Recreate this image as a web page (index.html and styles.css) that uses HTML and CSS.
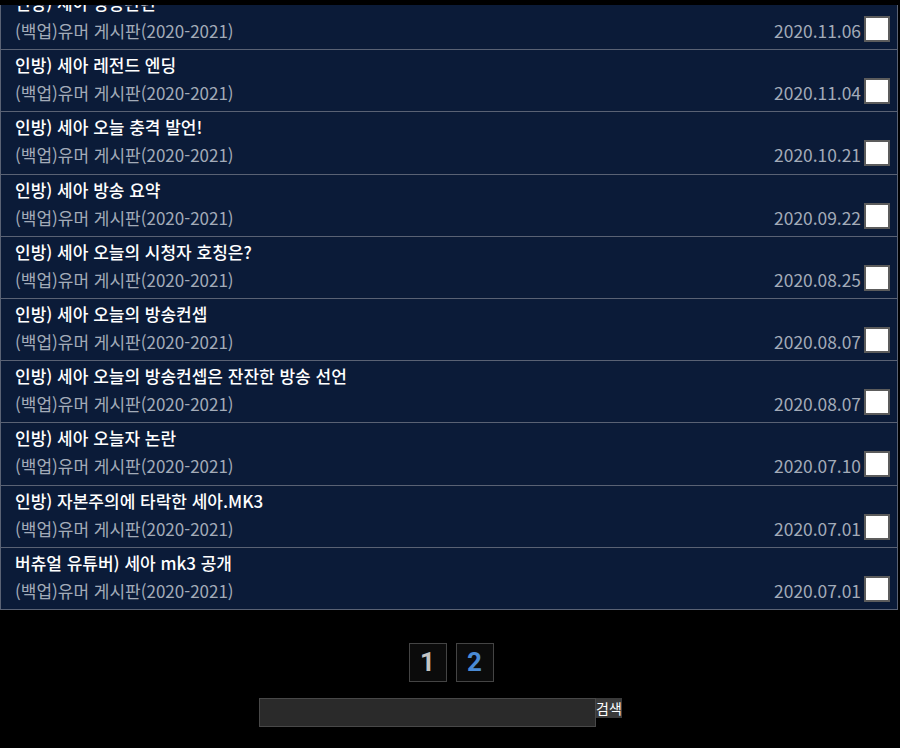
FILE: index.html
```html
<!DOCTYPE html>
<html lang="ko">
<head>
    <meta charset="UTF-8">
    <meta name="viewport" content="width=device-width, initial-scale=1.0">
    <title>(백업)유머 게시판</title>
    <link rel="stylesheet" href="styles.css">
</head>
<body>
    <div class="topbar"></div>
    <div class="board">
        <ul class="post-list">
            <li class="post">
                <div class="post-title">인방) 세아 방송관련</div>
                <div class="post-meta">
                    <span class="post-board">(백업)유머 게시판(2020-2021)</span>
                    <span class="post-side"><span class="post-date">2020.11.06</span><input type="checkbox" class="post-check"></span>
                </div>
            </li>
            <li class="post">
                <div class="post-title">인방) 세아 레전드 엔딩</div>
                <div class="post-meta">
                    <span class="post-board">(백업)유머 게시판(2020-2021)</span>
                    <span class="post-side"><span class="post-date">2020.11.04</span><input type="checkbox" class="post-check"></span>
                </div>
            </li>
            <li class="post">
                <div class="post-title">인방) 세아 오늘 충격 발언!</div>
                <div class="post-meta">
                    <span class="post-board">(백업)유머 게시판(2020-2021)</span>
                    <span class="post-side"><span class="post-date">2020.10.21</span><input type="checkbox" class="post-check"></span>
                </div>
            </li>
            <li class="post">
                <div class="post-title">인방) 세아 방송 요약</div>
                <div class="post-meta">
                    <span class="post-board">(백업)유머 게시판(2020-2021)</span>
                    <span class="post-side"><span class="post-date">2020.09.22</span><input type="checkbox" class="post-check"></span>
                </div>
            </li>
            <li class="post">
                <div class="post-title">인방) 세아 오늘의 시청자 호칭은?</div>
                <div class="post-meta">
                    <span class="post-board">(백업)유머 게시판(2020-2021)</span>
                    <span class="post-side"><span class="post-date">2020.08.25</span><input type="checkbox" class="post-check"></span>
                </div>
            </li>
            <li class="post">
                <div class="post-title">인방) 세아 오늘의 방송컨셉</div>
                <div class="post-meta">
                    <span class="post-board">(백업)유머 게시판(2020-2021)</span>
                    <span class="post-side"><span class="post-date">2020.08.07</span><input type="checkbox" class="post-check"></span>
                </div>
            </li>
            <li class="post">
                <div class="post-title">인방) 세아 오늘의 방송컨셉은 잔잔한 방송 선언</div>
                <div class="post-meta">
                    <span class="post-board">(백업)유머 게시판(2020-2021)</span>
                    <span class="post-side"><span class="post-date">2020.08.07</span><input type="checkbox" class="post-check"></span>
                </div>
            </li>
            <li class="post">
                <div class="post-title">인방) 세아 오늘자 논란</div>
                <div class="post-meta">
                    <span class="post-board">(백업)유머 게시판(2020-2021)</span>
                    <span class="post-side"><span class="post-date">2020.07.10</span><input type="checkbox" class="post-check"></span>
                </div>
            </li>
            <li class="post">
                <div class="post-title">인방) 자본주의에 타락한 세아.MK3</div>
                <div class="post-meta">
                    <span class="post-board">(백업)유머 게시판(2020-2021)</span>
                    <span class="post-side"><span class="post-date">2020.07.01</span><input type="checkbox" class="post-check"></span>
                </div>
            </li>
            <li class="post">
                <div class="post-title">버츄얼 유튜버) 세아 mk3 공개</div>
                <div class="post-meta">
                    <span class="post-board">(백업)유머 게시판(2020-2021)</span>
                    <span class="post-side"><span class="post-date">2020.07.01</span><input type="checkbox" class="post-check"></span>
                </div>
            </li>
        </ul>
    </div>

    <div class="pager">
        <a class="page-btn">1</a>
        <a class="page-btn current">2</a>
    </div>

    <form class="search" onsubmit="return false">
        <input type="text" class="search-input">
        <button class="search-btn">검색</button>
    </form>
</body>
</html>
```

FILE: styles.css
```css
body {
    margin: 0;
    padding: 0;
    background-color: #000;
    font-family: "Noto Sans CJK KR", "Noto Sans", sans-serif;
    color: #fff;
}
.topbar {
    position: fixed;
    top: 0;
    left: 0;
    right: 0;
    height: 5px;
    background: #000;
    z-index: 10;
}
.board {
    margin-top: -12px;
    margin-right: 2px;
    background: #0b1b38;
    border-left: 1px solid #5a6274;
    border-right: 1px solid #5a6274;
}
.post-list {
    list-style: none;
    margin: 0;
    padding: 0;
}
.post {
    padding: 2px 7px 4px 14px;
    border-bottom: 1px solid #5a6274;
    height: 55.2px;
}
.post-title {
    font-size: 17px;
    font-weight: 500;
    line-height: 26px;
    color: #fff;
}
.post-meta {
    display: flex;
    justify-content: space-between;
    align-items: flex-end;
    line-height: 26px;
    font-size: 17px;
}
.post-board {
    color: #a3abb8;
}
.post-side {
    display: flex;
    align-items: flex-end;
}
.post-date {
    color: #a3abb8;
    font-size: 17.4px;
}
.post-check {
    appearance: none;
    -webkit-appearance: none;
    width: 26px;
    height: 26px;
    margin: 0 0 2px 3px;
    background: #fff;
    border: 2px solid #5c5c5c;
    box-sizing: border-box;
}
.pager {
    display: flex;
    justify-content: center;
    gap: 9px;
    margin-top: 33px;
    padding-left: 2px;
}
.page-btn {
    width: 36px;
    height: 37px;
    border: 1px solid #444;
    background: #0b0b0b;
    color: #c4c4c4;
    font-family: Roboto, "Liberation Sans", sans-serif;
    font-weight: bold;
    font-size: 26px;
    line-height: 37px;
    text-align: center;
}
.page-btn.current {
    color: #4a8ad4;
}
.search {
    display: flex;
    justify-content: center;
    align-items: flex-start;
    margin-top: 16px;
    padding-right: 19px;
}
.search-input {
    width: 337px;
    height: 29px;
    box-sizing: border-box;
    margin: 0;
    background: #2a2a2a;
    border: 1px solid #484848;
}
.search-btn {
    margin: 0;
    padding: 0;
    width: 26px;
    height: 20px;
    border: none;
    background: #3a3a3a;
    color: #fff;
    font-family: "Noto Sans CJK KR", sans-serif;
    font-size: 14px;
    line-height: 20px;
    overflow: hidden;
    white-space: nowrap;
}
```
